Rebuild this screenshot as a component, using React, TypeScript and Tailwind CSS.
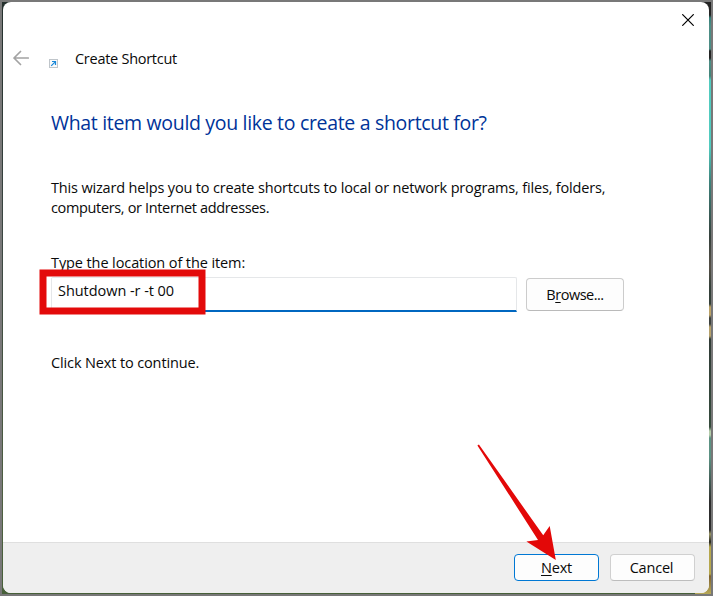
/**
 * CreateShortcut — first step of the Windows "Create Shortcut" wizard,
 * with a red box round the location field and a red arrow on the Next button.
 */

import type { ReactNode } from "react";

function BackIcon() {
  return (
    <svg className="w-4 h-4 shrink-0" viewBox="0 0 16 16" fill="none" stroke="#a3a3a3" strokeWidth={1.7}>
      <path strokeLinecap="round" strokeLinejoin="round" d="M15.3 8H1M7.5 1.5L1 8l6.5 6.5" />
    </svg>
  );
}

function ShortcutIcon() {
  return (
    <svg className="w-[9px] h-[9px] shrink-0" viewBox="0 0 9 9" fill="none">
      <rect x="0.5" y="0.5" width="8" height="8" fill="#f8f9fa" stroke="#bfc5ca" />
      <path d="M2.2 6.8L6.2 2.8M3 2.5h3.5V6" stroke="#1687d9" strokeWidth={1.2} />
    </svg>
  );
}

function CloseIcon() {
  return (
    <svg className="w-3 h-3" viewBox="0 0 12 12" fill="none" stroke="#000000" strokeWidth={1.2}>
      <path d="M0.3 0.3l11.4 11.4M11.7 0.3L0.3 11.7" />
    </svg>
  );
}

// ---------------------------------------------------------------------------
// Push button
// ---------------------------------------------------------------------------

interface PushButtonProps {
  children: ReactNode;
  className: string;
}

function PushButton({ children, className }: PushButtonProps) {
  return (
    <button
      type="button"
      className={`flex items-center justify-center shrink-0 rounded-[4px] border bg-[#fdfdfd] ${className}`}
    >
      <span>{children}</span>
    </button>
  );
}

function AccessKey({ children }: { children: ReactNode }) {
  return <span className="underline decoration-1 underline-offset-2">{children}</span>;
}

// ---------------------------------------------------------------------------
// Wizard
// ---------------------------------------------------------------------------

export default function App() {
  return (
    <div className="relative w-[713px] h-[596px] overflow-hidden bg-[#787878] p-[2px] font-['Open_Sans','Noto_Sans',sans-serif] text-[14.5px] leading-5 tracking-[-0.2px] text-[#0a0a0a]">
      {/* Sliver of desktop wallpaper behind the window */}
      <div className="flex w-[709px] h-[592px] bg-[linear-gradient(#24302d,#3c4743_40%,#4f6042_85%,#476039)]">
        <div className="flex-1" />
        <div className="w-4 bg-[linear-gradient(#242424_0px,#242424_13px,#35817b_16px,#4c8d85_24px,#4c8d85_47px,#242424_49px,#242424_56px,#4c8d85_59px,#428479_74px,#51cbbf_78px,#51cbbf_145px,#3d827b_180px,#36413d_235px,#555047_265px,#344039_285px,#344039_302px,#bba267_305px,#bba267_313px,#3c413e_316px,#3c413e_322px,#b6a16b_325px,#b6a16b_334px,#313c37_337px,#354b3c_425px,#b4ccaa_429px,#b4ccaa_433px,#5c9283_436px,#5c9283_455px,#2d2d2d_500px,#2d2d2d_528px,#999564_532px,#25251f_540px,#b6a74d_545px,#b6a74d_572px,#7f612d_574px,#b7a958_592px)]" />
      </div>

      {/* Window */}
      <div className="relative -mt-[592px] ml-px flex w-[706px] h-[591px] flex-col overflow-hidden rounded-[8px] bg-white">
        <div className="flex h-9 shrink-0 items-center justify-end pr-[15px]">
          <CloseIcon />
        </div>

        <header className="flex h-10 shrink-0 items-center pl-[10px]">
          <BackIcon />
          <div className="ml-5 mt-[11px] flex">
            <ShortcutIcon />
          </div>
          <span className="ml-[17px] mt-[2px] tracking-[-0.27px]">Create Shortcut</span>
        </header>

        <main className="flex-1 pl-12">
          <h1 className="mt-[31px] text-[19.5px] leading-7 tracking-[-0.32px] text-[#003399]">
            What item would you like to create a shortcut for?
          </h1>
          <p className="mt-[41px] tracking-[-0.165px]">
            This wizard helps you to create shortcuts to local or network programs, files, folders,
            <br />
            <span className="tracking-[-0.35px]">computers, or Internet addresses.</span>
          </p>
          <label htmlFor="location" className="mt-[35px] block tracking-[-0.1px]">
            <AccessKey>T</AccessKey>ype the location of the item:
          </label>
          <div className="mt-1 flex gap-[9px]">
            <input
              id="location"
              type="text"
              defaultValue="Shutdown -r -t 00"
              className="h-[35px] w-[466px] rounded-t-[2px] border border-b-2 border-[#e5e7e9] border-b-[#0067c0] pl-1.5 pb-[7px] tracking-[-0.05px] outline-none"
            />
            <PushButton className="mt-px h-[33px] w-[98px] border-[#cccccc] border-b-[#bababa] tracking-[-0.5px]">
              B<AccessKey>r</AccessKey>owse...
            </PushButton>
          </div>
          <p className="mt-[41px] tracking-[-0.13px]">Click Next to continue.</p>
        </main>

        <footer className="flex h-[51px] shrink-0 gap-[11px] justify-end border-t border-[#dfdfdf] bg-[#efefef] pr-[14px] pt-[11px]">
          <PushButton className="h-[27px] w-[85px] border-[#0078d4]">
            <AccessKey>N</AccessKey>ext
          </PushButton>
          <PushButton className="h-[27px] w-[85px] border-[#d0d0d0] border-b-[#bdbdbd] pr-[2px]">Cancel</PushButton>
        </footer>
      </div>

      {/* Highlight box and pointer */}
      <svg
        className="pointer-events-none absolute left-[39px] top-[269px] w-[167px] h-[46px]"
        viewBox="0 0 167 46"
        fill="none"
        stroke="#e30a0a"
        strokeWidth={7}
      >
        <rect x="4" y="4" width="159" height="38" />
      </svg>
      <svg
        className="pointer-events-none absolute left-[470px] top-[440px] w-[100px] h-[126px]"
        viewBox="470 440 100 126"
        fill="#e30808"
      >
        <path d="M477.4 445.4l1.5-1L543.2 535.3l6.5-9.3 6.1 34-29.4-18.5 11.6-1.6z" />
      </svg>
    </div>
  );
}
